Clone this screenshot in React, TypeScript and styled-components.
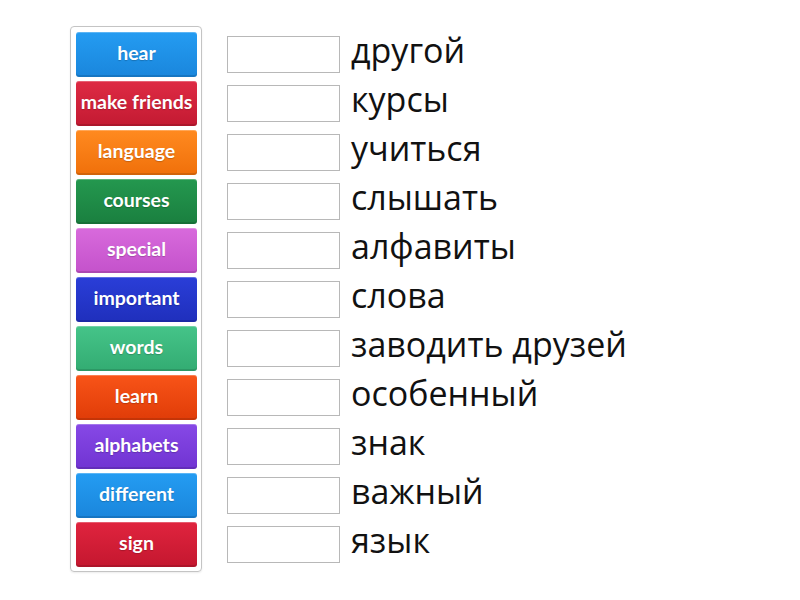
import React from "react";
import styled, { createGlobalStyle } from "styled-components";

const Global = createGlobalStyle`
  body { margin: 0; background: #fff; }
`;

const Page = styled.div`
  display: flex;
  align-items: flex-start;
  padding: 26px 0 0 70px;
  gap: 25px;
  width: 800px;
  height: 600px;
  box-sizing: border-box;
`;

const Bank = styled.div`
  display: flex;
  flex-direction: column;
  gap: 4px;
  padding: 5px 4px 4px 5px;
  border: 1px solid #c4c4c4;
  border-radius: 4px;
  box-shadow: 0 1px 2px rgba(0,0,0,0.08);
`;

const Tile = styled.div<{ $c: string; $d: string }>`
  width: 121px;
  height: 45px;
  box-sizing: border-box;
  padding-bottom: 4px;
  border-radius: 3px;
  background: linear-gradient(to bottom, ${(p) => p.$c}, ${(p) => p.$d});
  box-shadow: inset 0 1px 0 rgba(255,255,255,0.25), inset 0 -2px 0 rgba(0,0,0,0.12);
  display: flex;
  align-items: center;
  justify-content: center;
  color: #fff;
  font-family: Lato, "Open Sans", sans-serif;
  font-weight: 700;
  font-size: 19.5px;
  text-shadow: 0 1px 1px rgba(0,0,0,0.2);
  white-space: nowrap;
`;

const Rows = styled.div`
  display: flex;
  flex-direction: column;
  gap: 12px;
  padding-top: 10px;
`;

const Row = styled.div`
  display: flex;
  align-items: center;
  gap: 11px;
  height: 37px;
`;

const Slot = styled.div`
  width: 113px;
  height: 37px;
  box-sizing: border-box;
  border: 1px solid #b8b8b8;
  background: #fff;
`;

const Word = styled.div`
  font-family: "Open Sans", sans-serif;
  font-size: 34px;
  color: #111;
  line-height: 37px;
  margin-top: -8px;
`;

const tiles: [string, string, string][] = [
  ["hear", "#249cf2", "#1a86dc"],
  ["make friends", "#de2b44", "#c31a32"],
  ["language", "#ff8a20", "#f0700a"],
  ["courses", "#24984f", "#1a7f3f"],
  ["special", "#d86adc", "#c452cb"],
  ["important", "#2a3ed8", "#1f2fbc"],
  ["words", "#45c489", "#33ac72"],
  ["learn", "#f85418", "#e03c08"],
  ["alphabets", "#8748e6", "#7034d2"],
  ["different", "#249cf2", "#1a86dc"],
  ["sign", "#e0243e", "#c4172f"],
];

const words = [
  "другой",
  "курсы",
  "учиться",
  "слышать",
  "алфавиты",
  "слова",
  "заводить друзей",
  "особенный",
  "знак",
  "важный",
  "язык",
];

export default function App() {
  return (
    <>
      <Global />
      <Page>
        <Bank>
          {tiles.map(([t, c, d]) => (
            <Tile key={t} $c={c} $d={d}>
              {t}
            </Tile>
          ))}
        </Bank>
        <Rows>
          {words.map((w) => (
            <Row key={w}>
              <Slot />
              <Word>{w}</Word>
            </Row>
          ))}
        </Rows>
      </Page>
    </>
  );
}
